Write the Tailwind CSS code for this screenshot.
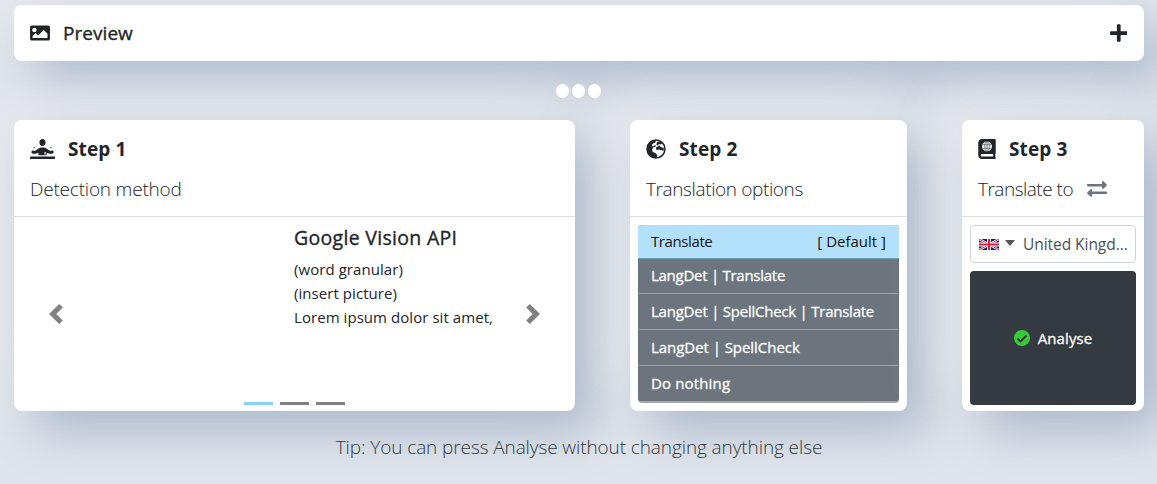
<!DOCTYPE html>
<html lang="en">
<head>
<meta charset="utf-8">
<title>Translate</title>
<script src="https://cdn.jsdelivr.net/npm/@tailwindcss/browser@4"></script>
</head>
<body class="h-[484px] overflow-hidden bg-[#e0e5ec] pt-[5px] pl-[14px] pr-[13px] font-['Open_Sans','Noto_Sans',sans-serif] text-[#212529]">
<header class="flex h-14 items-center rounded-lg bg-white px-4 shadow-[20px_20px_50px_#abb8cb,-20px_-20px_50px_rgba(240,240,240,0.65)]">
  <svg class="h-5 w-5" viewBox="0 0 512 512" fill="currentColor"><path d="M464 448H48c-26.500 0-48-21.500-48-48V112c0-26.500 21.500-48 48-48h416c26.500 0 48 21.500 48 48v288c0 26.500-21.500 48-48 48zM112 120c-31 0-56 25-56 56s25 56 56 56 56-25 56-56-25-56-56-56zM64 384h384V272l-87.500-87.500c-4.700-4.700-12.300-4.700-17 0L208 320l-55.500-55.500c-4.700-4.700-12.300-4.700-17 0L64 336v48z"/></svg>
  <h5 class="ml-[13px] text-[19px] font-medium tracking-[0.05px] [-webkit-text-stroke:0.35px]">Preview</h5>
  <svg class="mr-px ml-auto h-5 w-[17.500px]" viewBox="0 0 448 512" fill="currentColor"><path d="M416 208H272V64c0-17.670-14.330-32-32-32h-32c-17.670 0-32 14.330-32 32v144H32c-17.670 0-32 14.330-32 32v32c0 17.670 14.330 32 32 32h144v144c0 17.670 14.330 32 32 32h32c17.670 0 32-14.330 32-32V304h144c17.670 0 32-14.330 32-32v-32c0-17.670-14.330-32-32-32z"/></svg>
</header>
<div class="relative z-10 mt-[23px] mr-[1px] flex h-[14px] justify-center gap-[3px]">
  <i class="h-[14px] w-[13px] rounded-full bg-white"></i><i class="h-[14px] w-[13px] rounded-full bg-white"></i><i class="h-[14px] w-[13px] rounded-full bg-white"></i>
</div>
<main class="mt-[22px] flex h-[291px] gap-[55px]">
  <section class="flex w-[561px] flex-col rounded-lg bg-white shadow-[20px_20px_50px_#abb8cb,-20px_-20px_50px_rgba(240,240,240,0.65)]">
    <div class="h-[97px] border-b border-[#dfdfdf] px-4 pt-4">
      <div class="flex h-[26px] items-center">
        <svg class="h-5 w-[25px]" viewBox="0 0 640 512" fill="currentColor"><path d="M624 448H16c-8.800 0-16 7.200-16 16v32c0 8.800 7.200 16 16 16h608c8.800 0 16-7.200 16-16v-32c0-8.800-7.200-16-16-16zM320 176c44.200 0 80-39.400 80-88S364.200 0 320 0s-80 39.400-80 88 35.800 88 80 88z"/><path d="M84 216l26-10 12 26-26 10zM556 216l-26-10-12 26 26 10zM36 334c0-25 20-42 43-42 17 0 32 6 42 16l96-64c20-18 49-29 103-29s83 11 103 29l96 64c10-10 25-16 42-16 23 0 43 17 43 42s-19 42-43 42h-60l-72-23-8 63H219l-8-63-72 23H79c-24 0-43-17-43-42z"/><path fill="white" d="M371 335h30v60h-30z"/></svg>
        <h5 class="ml-[13px] text-[19px] font-bold tracking-[0.1px]">Step 1</h5>
      </div>
      <p class="mt-[12px] text-[19px] leading-[30px] font-light tracking-[-0.2px]">Detection method</p>
    </div>
    <div class="relative flex-1">
      <div class="flex justify-between pt-[87px] pr-[35px] pl-[35px]">
        <svg class="h-5 w-[14px]" viewBox="0 0 14 20" fill="#808080"><path d="M10.200 0l3.600 3.600L7.300 10l6.500 6.400-3.600 3.600L0 10z"/></svg>
        <svg class="h-5 w-[14px]" viewBox="0 0 14 20" fill="#808080"><path d="M3.800 0L.2 3.600 6.700 10 .2 16.400 3.800 20 14 10z"/></svg>
      </div>
      <div class="absolute top-[9px] left-[280px] whitespace-nowrap">
        <h5 class="text-[19.500px] leading-6 font-medium tracking-[0.3px] [-webkit-text-stroke:0.35px]">Google Vision API</h5>
        <p class="mt-[7px] text-[15px] leading-6 tracking-[0.06px]">(word granular)<br>(insert picture)<br>Lorem ipsum dolor sit amet,</p>
      </div>
      <div class="absolute bottom-[6px] left-[230px] flex gap-[7px]"><i class="h-[3px] w-[29px] bg-[#87cefa]"></i><i class="h-[3px] w-[29px] bg-[#808080]"></i><i class="h-[3px] w-[29px] bg-[#808080]"></i></div>
    </div>
  </section>
  <section class="w-[277px] rounded-lg bg-white shadow-[20px_20px_50px_#abb8cb,-20px_-20px_50px_rgba(240,240,240,0.65)]">
    <div class="h-[97px] border-b border-[#dfdfdf] px-4 pt-4">
      <div class="flex h-[26px] items-center">
        <svg class="h-5 w-5" viewBox="0 0 20 20"><circle cx="10" cy="10" r="9" fill="none" stroke="currentColor" stroke-width="1.500"/><path fill="currentColor" d="M10 1C4 1 1 5 1 10s3 9 9 9l1.500-2.500-1.700-2.200-3-1.200-.8-2.600 1.500-2.200 2-.6.300-1.700-1.600.4L7 7.700 5.600 6.400 7.200 4.300l2-.6zM11 3.200l2.400-1 2.800 2.300-1.600 1-1.500-.6-1.500 1.500-1.300-.9zM10 8.600l3.500-2 1.500 1.700 2.800.5-.2 3.200-2.700-.9-2-.6-2.600.4z"/></svg>
        <h5 class="ml-[13px] text-[19px] font-bold tracking-[0.1px]">Step 2</h5>
      </div>
      <p class="mt-[12px] text-[19px] leading-[30px] font-light tracking-[-0.38px]">Translation options</p>
    </div>
    <div class="mx-2 mt-2 overflow-hidden rounded-[4px] border-b-2 border-[#a4a6a8] bg-[#6c757d] text-[15px] text-white">
      <div class="flex h-[34px] items-center justify-between border-b border-[#6c9cba] bg-[#b3e1fc] px-[13px] text-[#101214]"><span class="tracking-[-0.4px]">Translate</span><span>[ Default ]</span></div>
      <div class="mx-px flex h-[35px] items-center border-b border-[#a4a6a8] pb-px pl-3 tracking-[-0.27px] [-webkit-text-stroke:0.3px]">LangDet | Translate</div>
      <div class="mx-px flex h-9 items-center border-b border-[#a4a6a8] pl-3 tracking-[-0.24px] [-webkit-text-stroke:0.3px]">LangDet | SpellCheck | Translate</div>
      <div class="mx-px flex h-9 items-center border-b border-[#a4a6a8] pl-3 tracking-[-0.05px] [-webkit-text-stroke:0.3px]">LangDet | SpellCheck</div>
      <div class="mx-px flex h-[35px] items-center pl-3 tracking-[0.15px] [-webkit-text-stroke:0.3px]">Do nothing</div>
    </div>
  </section>
  <section class="w-[182px] rounded-lg bg-white shadow-[20px_20px_50px_#abb8cb,-20px_-20px_50px_rgba(240,240,240,0.65)]">
    <div class="h-[97px] border-b border-[#dfdfdf] px-4 pt-4">
      <div class="flex h-[26px] items-center">
        <svg class="h-5 w-[18px]" viewBox="0 0 448 512"><path fill="currentColor" d="M448 358.400V25.600c0-16-9.600-25.600-25.600-25.600H96C41.600 0 0 41.600 0 96v320c0 54.400 41.600 96 96 96h326.400c12.800 0 25.600-9.600 25.600-25.600v-16c0-6.400-3.200-12.800-9.600-19.200-3.200-16-3.200-60.800 0-73.600 6.400-3.200 9.600-9.600 9.600-19.200zM381 448H96c-16 0-32-12.800-32-32s16-32 32-32h285z"/><circle cx="224" cy="192" r="128" fill="white"/><g fill="none" stroke="currentColor" stroke-width="14"><ellipse cx="224" cy="192" rx="58" ry="124"/><path d="M224 64v256M104 148h240M104 236h240"/></g></svg>
        <h5 class="ml-[13px] text-[19px] font-bold tracking-[0.1px]">Step 3</h5>
      </div>
      <div class="mt-[12px] flex items-center"><p class="text-[19px] leading-[30px] font-light tracking-[-0.5px]">Translate to</p>
        <svg class="ml-[14px] h-4 w-5" viewBox="0 0 20 16" fill="#6c757d"><path d="M1 3h14V1.200C15 .2 16-.3 16.700.4L19.500 3.200q.8.800 0 1.600L16.700 7.600C16 8.300 15 7.800 15 6.800V5.500H1Q0 5.500 0 4.200T1 3zM19 10.500H5V9.200C5 8.200 4 7.700 3.300 8.400L.5 11.200q-.8.800 0 1.600l2.800 2.800c.7.700 1.700.2 1.700-.8V13h14q1 0 1-1.200t-1-1.300z"/></svg>
      </div>
    </div>
    <div class="mx-2 mt-2 flex h-[38px] items-center rounded-[4px] border border-[#ced4da] pl-2 text-[#495057]">
      <svg class="h-[11px] w-5" viewBox="0 0 20 11"><path fill="#012169" d="M0 0h20v11H0z"/><path stroke="white" stroke-width="2.400" d="M0 0l20 11M20 0L0 11"/><path stroke="#d8213b" stroke-width="1" d="M0 0l20 11M20 0L0 11"/><path stroke="white" stroke-width="4" d="M10 0v11M0 5.500h20"/><path stroke="#d8213b" stroke-width="2.200" d="M10 0v11M0 5.500h20"/></svg>
      <svg class="mb-[2px] ml-[6px] h-[6px] w-[10px]" viewBox="0 0 10 6"><path fill="#555" d="M0 0h10L5 6z"/></svg>
      <span class="ml-2 pt-[2px] text-[15.500px] whitespace-nowrap tracking-[-0.05px]">United Kingd...</span>
    </div>
    <button class="mx-2 mt-2 flex h-[134px] w-[166px] items-center justify-center rounded-[4px] bg-[#343a40] text-[15px] tracking-[0.1px] text-white [-webkit-text-stroke:0.3px]">
      <svg class="mr-2 h-4 w-4" viewBox="0 0 16 16"><circle cx="8" cy="8" r="8" fill="#32cd32"/><path d="M3.500 8.500l3 3 6-6" fill="none" stroke="#343a40" stroke-width="2"/></svg>Analyse
    </button>
  </section>
</main>
<p class="relative mt-[21px] text-center text-[19px] leading-[30px] font-light tracking-[-0.1px] text-[#343a40]">Tip: You can press Analyse without changing anything else</p>
</body>
</html>
